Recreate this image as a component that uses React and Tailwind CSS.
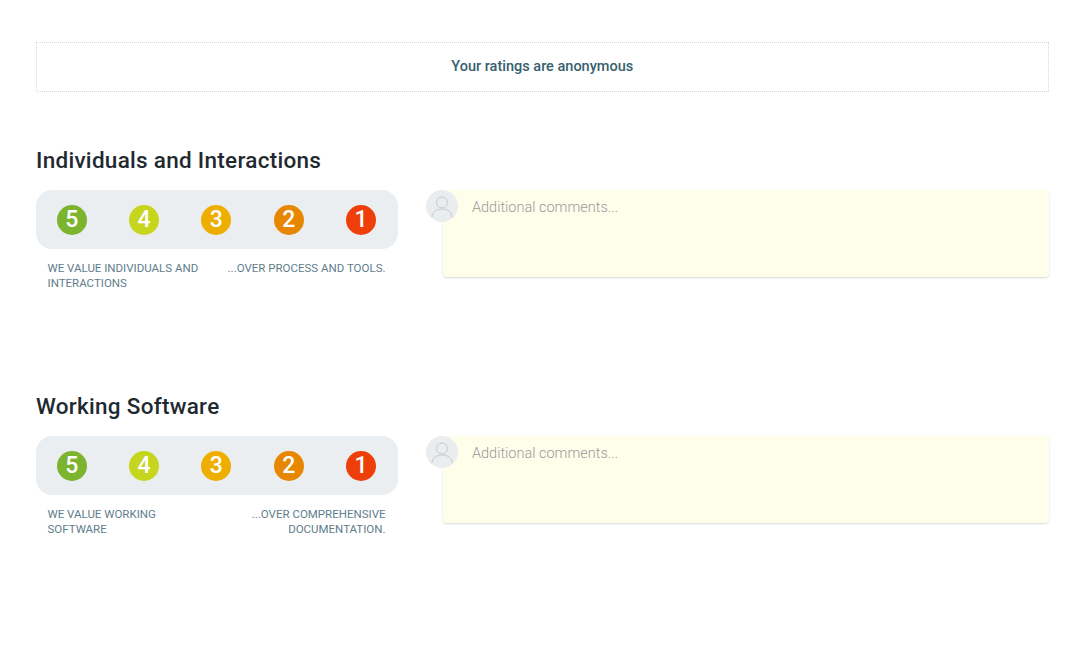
const scale = [
  { n: 5, c: "bg-[#7cb32f]" },
  { n: 4, c: "bg-[#c6d61e]" },
  { n: 3, c: "bg-[#eeae00]" },
  { n: 2, c: "bg-[#e78700]" },
  { n: 1, c: "bg-[#ee3f0a]" },
];

function Avatar() {
  return (
    <div className="absolute left-0 top-0 w-8 h-8 rounded-full bg-[#e9edf0] overflow-hidden">
      <svg viewBox="0 0 32 32" className="w-8 h-8" fill="none" stroke="#c2c9ce" strokeWidth="1">
        <circle cx="16" cy="12.5" r="5.5" />
        <path d="M6 27c0-5 4.5-8 10-8s10 3 10 8" />
      </svg>
    </div>
  );
}

function Section({ title, left, right }) {
  return (
    <section className="h-[246px]">
      <h2 className="text-[22.5px] tracking-[0.28px] leading-[26px] font-medium text-[#1f2a30]">{title}</h2>
      <div className="flex mt-[17px]">
        <div className="w-[362px] shrink-0">
          <div className="h-[59px] rounded-2xl bg-[#ebeef1] flex items-center justify-between pl-[20.7px] pr-[22px]">
            {scale.map((s) => (
              <div
                key={s.n}
                className={`w-[30px] h-[30px] rounded-full ${s.c} text-white text-[23px] font-[550] leading-none flex items-center justify-center`}
              >
                {s.n}
              </div>
            ))}
          </div>
          <div className="flex justify-between pl-[11.5px] pr-[12.5px] mt-[12px] text-[11.5px] leading-[15px] text-[#5f7d8c]">
            <div className="w-[165px]">{left}</div>
            <div className="w-[165px] text-right">{right}</div>
          </div>
        </div>
        <div className="relative flex-1 ml-[28px] pl-[17px]">
          <Avatar />
          <div className="h-[87px] bg-[#fffeeb] rounded-sm shadow-[0_1px_2px_rgba(0,0,0,0.15)] pl-[29px] pt-[7.5px] text-[14.5px] leading-5 font-light text-[#9a9a9a]">
            Additional comments...
          </div>
        </div>
      </div>
    </section>
  );
}

export default function App() {
  return (
    <div className="bg-white min-h-[659px] pl-9 pr-[36.5px] pt-[42px] font-['Roboto',sans-serif]">
      <div className="h-[50px] pb-[1px] border border-dotted border-[#d3d9dc] flex items-center justify-center text-[14.5px] font-[480] text-[#37616f]">
        Your ratings are anonymous
      </div>
      <div className="mt-[55px]">
        <Section
          title="Individuals and Interactions"
          left="WE VALUE INDIVIDUALS AND INTERACTIONS"
          right="...OVER PROCESS AND TOOLS."
        />
        <Section
          title="Working Software"
          left="WE VALUE WORKING SOFTWARE"
          right="...OVER COMPREHENSIVE DOCUMENTATION."
        />
      </div>
    </div>
  );
}
